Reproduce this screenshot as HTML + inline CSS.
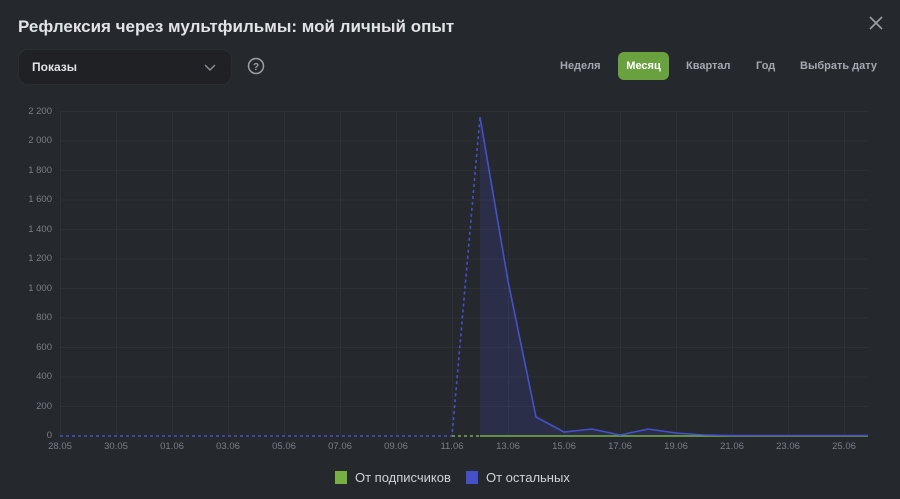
<!DOCTYPE html>
<html><head><meta charset="utf-8"><style>
body{margin:0;width:900px;height:499px;background:#25282c;font-family:"Liberation Sans",sans-serif;overflow:hidden;position:relative;color:#e1e3e6}
.t{position:absolute;left:18px;top:17px;font-size:17px;font-weight:bold;color:#e1e3e6}
.sel{position:absolute;left:18px;top:49px;width:212px;height:34px;background:#1f2124;border-radius:10px;border:1px solid #2a2d31}
.sel span{position:absolute;left:13px;top:10px;font-size:12px;font-weight:bold;color:#e1e3e6}
.tab{position:absolute;top:60px;font-size:11px;font-weight:bold;color:#a3a9b1}
.act{position:absolute;left:618px;top:52px;width:51px;height:28px;background:#69a13f;border-radius:6px;color:#fff;font-size:11px;font-weight:bold;text-align:center;line-height:28px}
.yl{position:absolute;left:0;width:52px;text-align:right;font-size:9.5px;color:#7a7f87}
.xl{position:absolute;top:441px;font-size:9.5px;color:#7a7f87;width:40px;text-align:center}
.lg{position:absolute;top:470px;font-size:13px;color:#d0d3d8}
.sq{position:absolute;top:471px;width:12px;height:13px}
</style></head><body>
<div class="t">Рефлексия через мультфильмы: мой личный опыт</div>
<svg style="position:absolute;left:868px;top:15px" width="16" height="16"><path d="M2 2L14 14M14 2L2 14" stroke="#9aa0a8" stroke-width="1.6"/></svg>
<div class="sel"><span>Показы</span><svg style="position:absolute;left:185px;top:12px" width="12" height="10"><path d="M1 3L6 8L11 3" stroke="#8a9099" stroke-width="1.4" fill="none"/></svg></div>
<svg style="position:absolute;left:247px;top:57px" width="18" height="18"><circle cx="9" cy="9" r="7.5" stroke="#9aa0a8" stroke-width="1.5" fill="none"/><text x="9" y="13" text-anchor="middle" font-size="10" font-weight="bold" fill="#9aa0a8" font-family="Liberation Sans">?</text></svg>
<div class="tab" style="left:560px">Неделя</div>
<div class="act">Месяц</div>
<div class="tab" style="left:686px">Квартал</div>
<div class="tab" style="left:756px">Год</div>
<div class="tab" style="left:800px">Выбрать дату</div>
<svg style="position:absolute;left:0;top:0" width="900" height="499">
<g stroke="#2d3136" stroke-width="1">
<line x1="60" y1="111.5" x2="868" y2="111.5"/><line x1="60" y1="141" x2="868" y2="141"/><line x1="60" y1="170.5" x2="868" y2="170.5"/><line x1="60" y1="200" x2="868" y2="200"/><line x1="60" y1="229.5" x2="868" y2="229.5"/><line x1="60" y1="259" x2="868" y2="259"/><line x1="60" y1="288.5" x2="868" y2="288.5"/><line x1="60" y1="318" x2="868" y2="318"/><line x1="60" y1="347.5" x2="868" y2="347.5"/><line x1="60" y1="377" x2="868" y2="377"/><line x1="60" y1="406.5" x2="868" y2="406.5"/>
<line x1="60.5" y1="111" x2="60.5" y2="436"/><line x1="116.5" y1="111" x2="116.5" y2="436"/><line x1="172.5" y1="111" x2="172.5" y2="436"/><line x1="228.5" y1="111" x2="228.5" y2="436"/><line x1="284.5" y1="111" x2="284.5" y2="436"/><line x1="340.5" y1="111" x2="340.5" y2="436"/><line x1="396.5" y1="111" x2="396.5" y2="436"/><line x1="452.5" y1="111" x2="452.5" y2="436"/><line x1="508.5" y1="111" x2="508.5" y2="436"/><line x1="564.5" y1="111" x2="564.5" y2="436"/><line x1="620.5" y1="111" x2="620.5" y2="436"/><line x1="676.5" y1="111" x2="676.5" y2="436"/><line x1="732.5" y1="111" x2="732.5" y2="436"/><line x1="788.5" y1="111" x2="788.5" y2="436"/><line x1="844.5" y1="111" x2="844.5" y2="436"/>
</g>
<path d="M480 436L480 117L508 281L536 417L564 432L592 429L620 435L648 429L676 433L704 435L868 436Z" fill="#3a3f8a" fill-opacity="0.3"/>
<path d="M60 436L452 436L480 117" stroke="#4651c8" stroke-width="1.6" stroke-dasharray="3 3" fill="none"/>
<path d="M452 436L480 436" stroke="#76b043" stroke-width="1.6" stroke-dasharray="3 3"/>
<path d="M480 436L868 436" stroke="#76b043" stroke-width="1.6"/>
<path d="M480 117L508 281L536 417L564 432L592 429L620 435L648 429L676 433L704 435L732 435.5L868 435.5" stroke="#4651c8" stroke-width="1.6" fill="none"/>
</svg>
<div class="yl" style="top:106px">2 200</div><div class="yl" style="top:135px">2 000</div><div class="yl" style="top:165px">1 800</div><div class="yl" style="top:194px">1 600</div><div class="yl" style="top:224px">1 400</div><div class="yl" style="top:253px">1 200</div><div class="yl" style="top:283px">1 000</div><div class="yl" style="top:312px">800</div><div class="yl" style="top:342px">600</div><div class="yl" style="top:371px">400</div><div class="yl" style="top:401px">200</div><div class="yl" style="top:430px">0</div>
<div class="xl" style="left:40px">28.05</div><div class="xl" style="left:96px">30.05</div><div class="xl" style="left:152px">01.06</div><div class="xl" style="left:208px">03.06</div><div class="xl" style="left:264px">05.06</div><div class="xl" style="left:320px">07.06</div><div class="xl" style="left:376px">09.06</div><div class="xl" style="left:432px">11.06</div><div class="xl" style="left:488px">13.06</div><div class="xl" style="left:544px">15.06</div><div class="xl" style="left:600px">17.06</div><div class="xl" style="left:656px">19.06</div><div class="xl" style="left:712px">21.06</div><div class="xl" style="left:768px">23.06</div><div class="xl" style="left:824px">25.06</div>
<div class="sq" style="left:335px;background:#76b043"></div><div class="lg" style="left:355px">От подписчиков</div>
<div class="sq" style="left:466px;background:#4651c8"></div><div class="lg" style="left:486px">От остальных</div>
</body></html>
